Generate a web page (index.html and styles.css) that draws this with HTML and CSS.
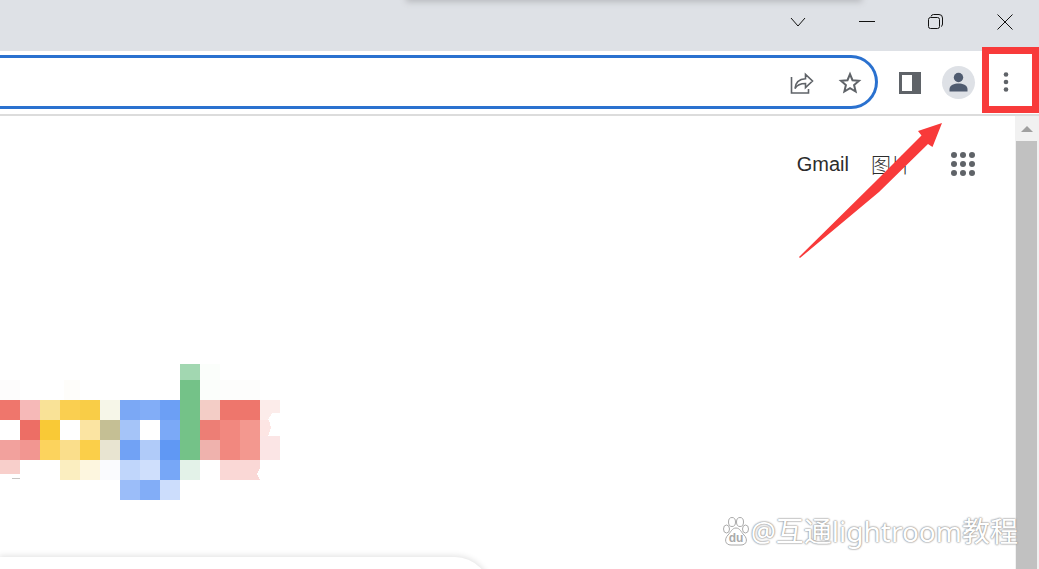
FILE: index.html
```
<!DOCTYPE html>
<html lang="zh-CN">
<head>
<meta charset="utf-8">
<title>Google</title>
<link rel="stylesheet" href="styles.css">
</head>
<body>
<div class="window">
  <header class="titlebar">
    <button class="win-btn" aria-label="Search tabs"><svg width="16" height="16" viewBox="0 0 16 16"><path d="M1 4l7 8 7-8"/></svg></button>
    <button class="win-btn" aria-label="Minimize"><svg width="16" height="16" viewBox="0 0 16 16"><path d="M0 7.500h16"/></svg></button>
    <button class="win-btn" aria-label="Restore"><svg width="16" height="16" viewBox="0 0 16 16"><rect x=".5" y="3.500" width="11" height="11" rx="2"/><path d="M3 2.500q.5-2 2.500-2h5.500a3.500 3.500 0 0 1 3.500 3.500v6q0 2-1.500 2.500"/></svg></button>
    <button class="win-btn" aria-label="Close"><svg width="16" height="16" viewBox="0 0 16 16"><path d="M.5 .5l15 15M15.500 .5l-15 15"/></svg></button>
  </header>
  <div class="toolbar">
    <div class="omnibox">
      <input class="address" type="text" aria-label="Address">
      <button class="icon-btn" aria-label="Share"><svg width="24" height="24" viewBox="0 0 24 24" fill="none" stroke="#5f6368" stroke-width="1.600"><path d="M1.500 7v16h17v-4M5 18.500C5.500 12.500 9 9 15.500 8.700V4.300l7 6.700-7 6.700v-4.200C10.500 13.500 7 15 5 18.500z"/></svg></button>
      <button class="icon-btn" aria-label="Bookmark"><svg width="24" height="24" viewBox="0 0 24 24" fill="none" stroke="#5f6368" stroke-width="2"><path d="M12 4.200l2.500 6 6.500.6-4.900 4.300 1.500 6.400-5.600-3.400-5.600 3.400 1.500-6.400L3 10.800l6.500-.6z"/></svg></button>
    </div>
    <button class="icon-btn" aria-label="Side panel"><svg width="24" height="24" viewBox="0 0 24 24"><path fill="#5f6368" fill-rule="evenodd" d="M1 2h22v22H1zM4 5v16h10V5z"/></svg></button>
    <button class="avatar" aria-label="Profile"><svg width="20" height="20" viewBox="0 0 20 20" fill="#4f5b6f"><circle cx="9.500" cy="5.500" r="4.700"/><path d="M.5 19.500V17c0-3.800 5-5.500 9-5.500s9 1.700 9 5.500v2.500z"/></svg></button>
    <button class="menu-btn" aria-label="Menu"><svg width="8" height="22" viewBox="0 0 8 22" fill="#5f6368"><circle cx="4" cy="3.500" r="2.300"/><circle cx="4" cy="11" r="2.300"/><circle cx="4" cy="18.500" r="2.300"/></svg></button>
  </div>
  <div class="viewport">
    <main class="page">
      <nav class="links">
        <a href="#">Gmail</a>
        <a href="#">图片</a>
        <button class="icon-btn apps" aria-label="Apps"><svg width="24" height="24" viewBox="0 0 24 24" fill="#5f6368"><circle cx="3" cy="3" r="3"/><circle cx="12" cy="3" r="3"/><circle cx="21" cy="3" r="3"/><circle cx="3" cy="12" r="3"/><circle cx="12" cy="12" r="3"/><circle cx="21" cy="12" r="3"/><circle cx="3" cy="21" r="3"/><circle cx="12" cy="21" r="3"/><circle cx="21" cy="21" r="3"/></svg></button>
      </nav>
      <svg class="logo" width="280" height="136" viewBox="0 0 280 136" shape-rendering="crispEdges" role="img" aria-label="Google">
        <path fill="#fdfcfc" d="M0 16h20v20H0z"/><path fill="#fefdfa" d="M64 16h16v20H64z"/><path fill="#fbfefb" d="M200 0h20v36h-20z"/><path fill="#fdfdfc" d="M220 16h40v20h-40z"/>
        <path fill="#ef766c" d="M0 36h20v20H0z"/><path fill="#f6b9b8" d="M20 36h20v20H20z"/><path fill="#f9e297" d="M40 36h20v20H40z"/><path fill="#facf50" d="M60 36h20v20H60z"/><path fill="#f9cd47" d="M80 36h20v20H80z"/><path fill="#f6f6e8" d="M100 36h20v20h-20z"/><path fill="#7ba8f5" d="M120 36h20v20h-20z"/><path fill="#82adf7" d="M140 36h20v20h-20z"/><path fill="#6c9ff5" d="M160 36h20v20h-20z"/>
        <path fill="#a2d7b1" d="M180 0h20v16h-20z"/><path fill="#74c288" d="M180 16h20v80h-20z"/><path fill="#f3cdc6" d="M200 36h20v20h-20z"/><path fill="#ee766c" d="M220 36h40v20h-40z"/><path fill="#fcecea" d="M260 36h20v13h-8l-4 7h-8z"/>
        <path fill="#ed6e65" d="M20 56h20v20H20z"/><path fill="#f9c936" d="M40 56h20v20H40z"/><path fill="#fbe4a2" d="M80 56h20v20H80z"/><path fill="#c5bf94" d="M100 56h20v20h-20z"/><path fill="#a5c4f8" d="M120 56h20v20h-20z"/><path fill="#7ba9f7" d="M160 56h20v20h-20z"/><path fill="#ed7e75" d="M200 56h20v20h-20z"/><path fill="#f2887f" d="M220 56h20v40h-20z"/><path fill="#f3988f" d="M240 56h20v40h-20z"/><path fill="#fde5e3" d="M260 56h9l2 8-3 8h-8z"/>
        <path fill="#f2a19d" d="M0 76h20v20H0z"/><path fill="#f29691" d="M20 76h20v20H20z"/><path fill="#fcd35d" d="M40 76h20v20H40z"/><path fill="#fade8b" d="M60 76h20v20H60z"/><path fill="#fbcf49" d="M80 76h20v20H80z"/><path fill="#e8e4d1" d="M100 76h20v20h-20z"/><path fill="#71a2f5" d="M120 76h20v20h-20z"/><path fill="#b0cbf9" d="M140 76h20v20h-20z"/><path fill="#6098f4" d="M160 76h20v20h-20z"/><path fill="#efb2ad" d="M200 76h20v20h-20z"/><path fill="#fbe5e5" d="M260 72h20v24h-20z"/>
        <path fill="#f8cfcb" d="M0 96h20v14H0z"/><path fill="#c7c5c3" d="M12 114h8v1h-8z"/><path fill="#fbeec0" d="M60 96h20v20H60z"/><path fill="#fdf6df" d="M80 96h20v20H80z"/><path fill="#fafbfe" d="M100 96h20v20h-20z"/><path fill="#c0d6fb" d="M120 96h20v20h-20z"/><path fill="#cfdffc" d="M140 96h20v20h-20z"/><path fill="#77a7f7" d="M160 96h20v20h-20z"/><path fill="#e3f2e8" d="M180 96h20v20h-20z"/><path fill="#fad8d6" d="M220 96h40v8l-3 6 3 6h-40z"/>
        <path fill="#9bbdf9" d="M120 116h20v20h-20z"/><path fill="#82adf7" d="M140 116h20v20h-20z"/><path fill="#ccddfc" d="M160 116h20v20h-20z"/>
      </svg>
      <div class="search-box"></div>
    </main>
    <div class="scrollbar"><div class="scroll-up"></div><div class="thumb"></div></div>
  </div>
  <div class="tab-shadow"></div>
  <div class="highlight"></div>
  <svg class="arrow" width="146" height="138" viewBox="0 0 146 138"><path fill="#f83a3a" d="M144 2l-24 8 3.500 4.500L76 62 1 136l1 1 79-66 49-48 4.500 3z"/></svg>
  <div class="watermark">
    <svg width="26" height="30" viewBox="0 0 26 30" fill="#fff" stroke="#aaa" stroke-width="1"><ellipse cx="3.500" cy="13" rx="3" ry="4"/><ellipse cx="9" cy="6" rx="3.500" ry="4.500"/><ellipse cx="17" cy="6" rx="3.500" ry="4.500"/><ellipse cx="22.500" cy="13" rx="3" ry="4"/><path d="M13 12c4 0 5 4 8 7 4 4 3 10-3 10H8c-6 0-7-6-3-10 3-3 4-7 8-7z"/><text class="du" x="13" y="26" text-anchor="middle">du</text></svg>
    <span>@互通lightroom教程</span>
  </div>
</div>
</body>
</html>
```
FILE: styles.css
```
* { box-sizing: border-box; }
body { margin: 0; font-family: "Liberation Sans", "Noto Sans CJK SC", sans-serif; background: #fff; }
button { border: 0; padding: 0; background: none; display: flex; align-items: center; justify-content: center; }
.window { position: relative; display: flex; flex-direction: column; height: 100vh; overflow: hidden; }
.titlebar { display: flex; justify-content: flex-end; height: 51px; flex: none; background: #dee1e6; }
.win-btn { width: 69px; height: 43px; }
.win-btn svg { fill: none; stroke: #111; stroke-width: 1; }
.toolbar { display: flex; align-items: center; flex: none; height: 65px; padding-bottom: 1px; border-bottom: 2px solid #dcdcdc; }
.omnibox { display: flex; align-items: center; flex: 1; height: 54px; gap: 24px; padding-right: 13px; margin-right: 20px; border: 3px solid #2a71cf; border-left: 0; border-radius: 0 27px 27px 0; }
.address { flex: 1; min-width: 0; height: 40px; border: 0; outline: 0; background: none; font-size: 20px; }
.icon-btn { width: 24px; height: 24px; flex: none; }
.avatar { width: 33px; height: 33px; margin-left: 20px; border-radius: 50%; background: #dee1e6; flex: none; }
.menu-btn { width: 24px; height: 32px; margin: 0 21px 0 19px; flex: none; }
.viewport { display: flex; flex: 1; min-height: 0; }
.page { display: flex; flex-direction: column; flex: 1; min-width: 0; overflow: hidden; }
.links { display: flex; align-items: center; justify-content: flex-end; height: 96px; padding-right: 40px; flex: none; gap: 22px; }
.links a { color: #2c2c2c; font-size: 20px; font-weight: 300; text-decoration: none; }
.apps { margin-left: 18px; }
.logo { margin-top: 152px; flex: none; }
.search-box { width: 490px; height: 70px; margin-top: 57px; flex: none; border-radius: 0 35px 35px 0; box-shadow: 0 0 6px 1px #e0e0e0; }
.scrollbar { width: 24px; flex: none; padding: 0 2px 0 1px; background: #f1f1f1; }
.scroll-up { height: 25px; display: flex; align-items: center; justify-content: center; }
.scroll-up::before { content: ""; border: 6px solid transparent; border-top: 0; border-bottom-color: #a0a0a0; }
.thumb { height: 100%; background: #c1c1c1; }
.tab-shadow { position: absolute; top: -10px; left: 408px; right: 179px; height: 10px; box-shadow: 0 0 6px 2px #b8babe; }
.highlight { position: absolute; top: 47px; right: 0; width: 57px; height: 66px; border: 7px solid #f83a3a; }
.arrow { position: absolute; top: 121px; right: 95px; }
.watermark { position: absolute; right: 21px; bottom: 18px; display: flex; align-items: center; gap: 2px; height: 40px; font-family: "Noto Sans", "Noto Sans CJK SC", sans-serif; font-size: 28px; line-height: 40px; color: #fff; white-space: nowrap; text-shadow: 0 0 1px #999, 0 0 2px #999, 0 0 2px #aaa; }
.du { font-family: "Liberation Sans", sans-serif; font-size: 12px; font-weight: bold; fill: #aaa; stroke: none; text-shadow: none; }
```
